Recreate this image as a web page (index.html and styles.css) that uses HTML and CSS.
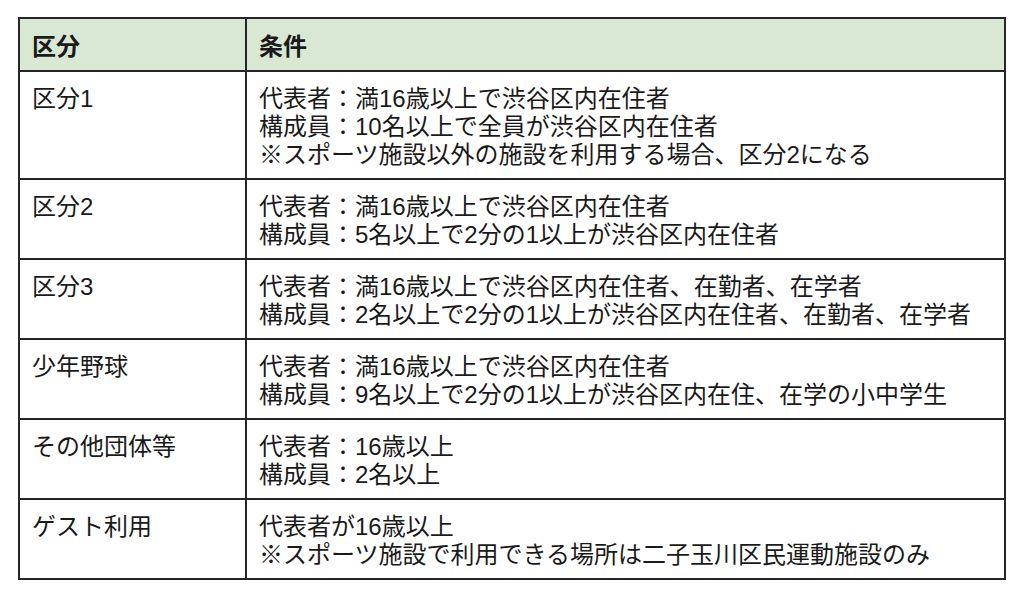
FILE: index.html
```html
<!DOCTYPE html>
<html lang="ja">
<head>
<meta charset="utf-8">
<link rel="stylesheet" href="styles.css">
<title>区分と条件</title>
</head>
<body>
<table class="terms">
  <colgroup>
    <col class="col-kind">
    <col class="col-cond">
  </colgroup>
  <thead>
    <tr><th>区分</th><th>条件</th></tr>
  </thead>
  <tbody>
    <tr><td>区分1</td><td>代表者：満16歳以上で渋谷区内在住者<br>構成員：10名以上で全員が渋谷区内在住者<br>※スポーツ施設以外の施設を利用する場合、区分2になる</td></tr>
    <tr><td>区分2</td><td>代表者：満16歳以上で渋谷区内在住者<br>構成員：5名以上で2分の1以上が渋谷区内在住者</td></tr>
    <tr><td>区分3</td><td>代表者：満16歳以上で渋谷区内在住者、在勤者、在学者<br>構成員：2名以上で2分の1以上が渋谷区内在住者、在勤者、在学者</td></tr>
    <tr><td>少年野球</td><td>代表者：満16歳以上で渋谷区内在住者<br>構成員：9名以上で2分の1以上が渋谷区内在住、在学の小中学生</td></tr>
    <tr><td>その他団体等</td><td>代表者：16歳以上<br>構成員：2名以上</td></tr>
    <tr><td>ゲスト利用</td><td>代表者が16歳以上<br>※スポーツ施設で利用できる場所は二子玉川区民運動施設のみ</td></tr>
  </tbody>
</table>
</body>
</html>
```

FILE: styles.css
```css
html, body {
  margin: 0;
  background: #ffffff;
}
body {
  padding: 17px 0 0 18px;
  font-family: "Liberation Sans", "Noto Sans CJK JP", sans-serif;
  font-size: 24px;
  line-height: 28px;
  color: #1a1a1a;
}
.terms {
  width: 988px;
  table-layout: fixed;
  border-collapse: separate;
  border-spacing: 0;
  border-top: 2px solid #262626;
  border-left: 2px solid #262626;
}
.col-kind { width: 227px; }
.terms th,
.terms td {
  border-right: 2px solid #262626;
  border-bottom: 2px solid #262626;
  padding: 13px 12px 9px 12px;
  text-align: left;
  vertical-align: top;
  font-weight: normal;
  white-space: nowrap;
}
.terms th {
  padding-top: 14px;
  background: #d9e8d3;
  font-weight: bold;
}
```
